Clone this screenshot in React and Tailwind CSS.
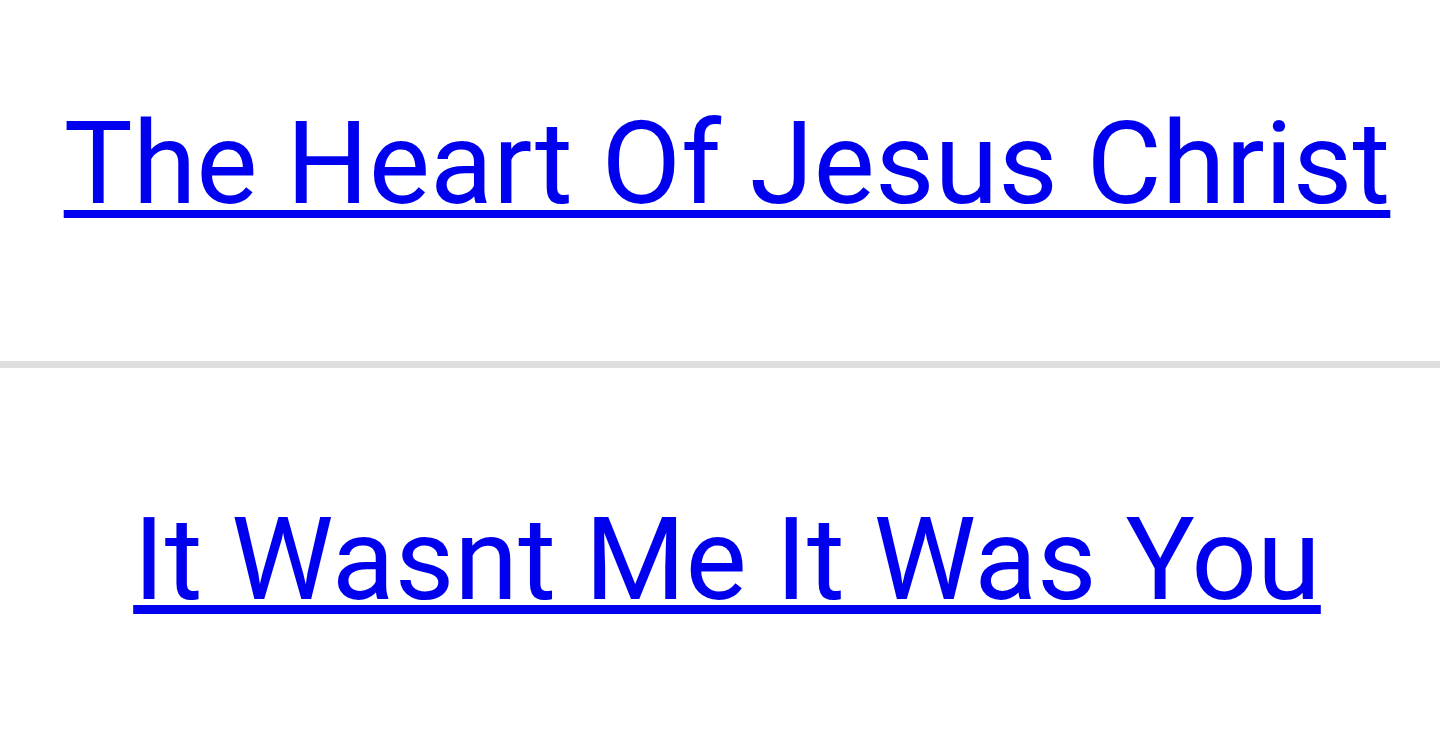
export default function App() {
  return (
    <div className="min-h-screen bg-white font-['Roboto',sans-serif]">
      <div className="flex justify-center pl-[14px] pt-[106px] pb-[139px]">
        <a
          href="#"
          className="text-[115.6px] leading-[116px] text-[#0000ee] underline decoration-[8px] underline-offset-[7px]"
        >
          The Heart Of Jesus Christ
        </a>
      </div>
      <hr className="border-0 h-[7px] bg-[#dedede]" />
      <div className="flex justify-center pl-[14px] pt-[134px]">
        <a
          href="#"
          className="text-[115.6px] leading-[116px] text-[#0000ee] underline decoration-[9px] underline-offset-[6px]"
        >
          It Wasnt Me It Was You
        </a>
      </div>
    </div>
  );
}
